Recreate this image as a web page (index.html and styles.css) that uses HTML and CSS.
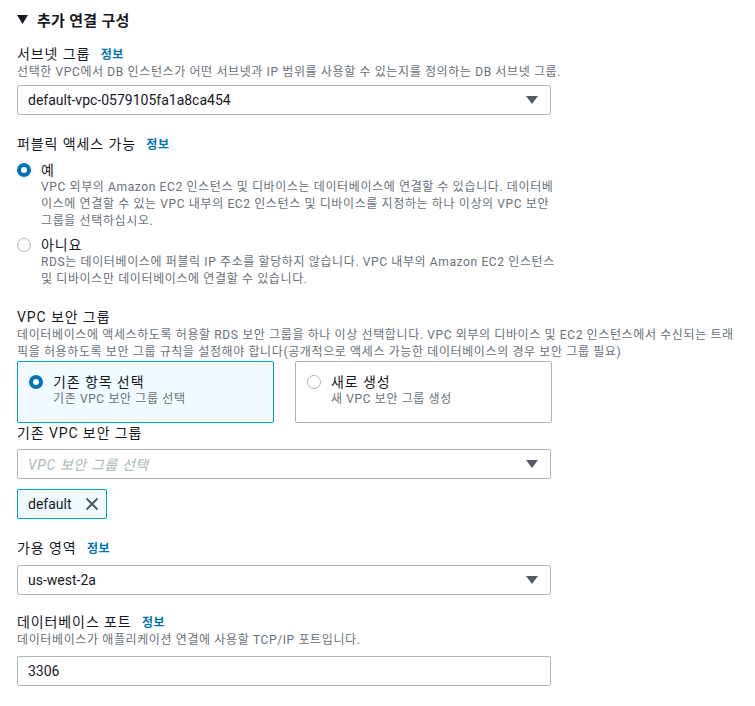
FILE: index.html
```html
<!DOCTYPE html>
<html lang="ko">
<head>
<meta charset="utf-8">
<link rel="stylesheet" href="styles.css">
</head>
<body>
<div class="page">
  <div class="section-head">
    <svg class="caret" width="11" height="9" viewBox="0 0 11 9"><path d="M0 0H11L5.5 9Z" fill="#16191f"/></svg>
    <span>추가 연결 구성</span>
  </div>

  <div class="field f-subnet">
    <div class="label">서브넷 그룹 <a class="info">정보</a></div>
    <div class="desc">선택한 VPC에서 DB 인스턴스가 어떤 서브넷과 IP 범위를 사용할 수 있는지를 정의하는 DB 서브넷 그룹.</div>
    <div class="select gap4">
      <span class="val">default-vpc-0579105fa1a8ca454</span>
      <svg class="arrow" width="12" height="8" viewBox="0 0 12 8"><path d="M0 0H12L6 8Z" fill="#545b64"/></svg>
    </div>
  </div>

  <div class="field f-public">
    <div class="label">퍼블릭 액세스 가능 <a class="info">정보</a></div>
    <div class="radio-row first">
      <span class="radio on"></span>
      <div class="radio-body">
        <div class="radio-title">예</div>
        <div class="desc">VPC 외부의 Amazon EC2 인스턴스 및 디바이스는 데이터베이스에 연결할 수 있습니다. 데이터베이스에 연결할 수 있는 VPC 내부의 EC2 인스턴스 및 디바이스를 지정하는 하나 이상의 VPC 보안 그룹을 선택하십시오.</div>
      </div>
    </div>
    <div class="radio-row">
      <span class="radio"></span>
      <div class="radio-body">
        <div class="radio-title">아니요</div>
        <div class="desc">RDS는 데이터베이스에 퍼블릭 IP 주소를 할당하지 않습니다. VPC 내부의 Amazon EC2 인스턴스 및 디바이스만 데이터베이스에 연결할 수 있습니다.</div>
      </div>
    </div>
  </div>

  <div class="field f-vpc">
    <div class="label">VPC 보안 그룹</div>
    <div class="desc wide">데이터베이스에 액세스하도록 허용할 RDS 보안 그룹을 하나 이상 선택합니다. VPC 외부의 디바이스 및 EC2 인스턴스에서 수신되는 트래픽을 허용하도록 보안 그룹 규칙을 설정해야 합니다(공개적으로 액세스 가능한 데이터베이스의 경우 보안 그룹 필요)</div>
    <div class="tiles">
      <div class="tile selected">
        <span class="radio on"></span>
        <div>
          <div class="radio-title">기존 항목 선택</div>
          <div class="desc">기존 VPC 보안 그룹 선택</div>
        </div>
      </div>
      <div class="tile">
        <span class="radio"></span>
        <div>
          <div class="radio-title">새로 생성</div>
          <div class="desc">새 VPC 보안 그룹 생성</div>
        </div>
      </div>
    </div>
    <div class="label">기존 VPC 보안 그룹</div>
    <div class="select gap6">
      <span class="placeholder">VPC 보안 그룹 선택</span>
      <svg class="arrow" width="12" height="8" viewBox="0 0 12 8"><path d="M0 0H12L6 8Z" fill="#545b64"/></svg>
    </div>
    <div class="token">
      <span>default</span>
      <svg width="14" height="14" viewBox="0 0 14 14"><path d="M1.5 1.5L12.5 12.5M12.5 1.5L1.5 12.5" stroke="#545b64" stroke-width="2"/></svg>
    </div>
  </div>

  <div class="field f-az">
    <div class="label">가용 영역 <a class="info">정보</a></div>
    <div class="select gap7">
      <span class="val">us-west-2a</span>
      <svg class="arrow" width="12" height="8" viewBox="0 0 12 8"><path d="M0 0H12L6 8Z" fill="#545b64"/></svg>
    </div>
  </div>

  <div class="field f-port">
    <div class="label">데이터베이스 포트 <a class="info">정보</a></div>
    <div class="desc">데이터베이스가 애플리케이션 연결에 사용할 TCP/IP 포트입니다.</div>
    <div class="select gap7">
      <span class="val">3306</span>
    </div>
  </div>
</div>
</body>
</html>
```

FILE: styles.css
```css
* { box-sizing: border-box; }
html, body { margin: 0; padding: 0; background: #ffffff; }
body {
  font-family: Roboto, "Noto Sans CJK KR", sans-serif;
  color: #16191f;
  font-size: 14px;
}
.page {
  padding: 8px 0 0 17px;
  width: 755px;
}
.section-head {
  display: flex;
  align-items: center;
  gap: 9px;
  height: 22px;
  font-size: 15px;
  font-weight: 700;
  letter-spacing: 0.3px;
}
.section-head .caret { margin-top: 1px; }

.field { width: 738px; }
.f-subnet { margin-top: 14px; }
.f-public { margin-top: 19px; }
.f-vpc { margin-top: 19px; }
.f-az { margin-top: 19px; }
.f-port { margin-top: 17px; }

.label {
  font-size: 14px;
  line-height: 20px;
  height: 20px;
  color: #16191f;
  letter-spacing: 0.9px;
}
.info {
  color: #0073bb;
  font-weight: 700;
  font-size: 12px;
  margin-left: 6px;
  letter-spacing: 0.5px;
}
.desc {
  font-size: 12px;
  line-height: 17px;
  color: #687078;
  letter-spacing: 0.62px;
}
.desc.wide { width: 725px; }

.select {
  width: 534px;
  height: 30px;
  border: 1px solid #aab7b8;
  border-radius: 2px;
  display: flex;
  align-items: center;
  justify-content: space-between;
  padding: 0 12px 0 10px;
  font-size: 14px;
}
.gap4 { margin-top: 4px; }
.gap6 { margin-top: 6px; }
.gap7 { margin-top: 7px; }
.placeholder {
  color: #aab7b8;
  font-style: italic;
  letter-spacing: 0.6px;
}

.radio-row {
  display: flex;
  gap: 10px;
  margin-top: 6px;
  width: 546px;
}
.radio-row.first { margin-top: 7px; }
.radio-title {
  font-size: 14px;
  line-height: 18px;
  letter-spacing: 0.9px;
}
.radio {
  flex: none;
  width: 14px;
  height: 14px;
  border-radius: 50%;
  border: 1.5px solid #aab7b8;
  background: #fff;
  margin-top: 2px;
}
.radio.on {
  border: 4px solid #0073bb;
}

.tiles {
  display: flex;
  gap: 21px;
}
.tile {
  width: 257px;
  height: 62px;
  border: 1px solid #aab7b8;
  border-radius: 2px;
  display: flex;
  gap: 10px;
  padding: 11px 11px 0 11px;
}
.tile.selected {
  background: #f1faff;
  border-color: #00a1c9;
}

.token {
  margin-top: 10px;
  width: 90px;
  height: 30px;
  border: 1px solid #00a1c9;
  border-radius: 2px;
  background: #f1faff;
  display: flex;
  align-items: center;
  justify-content: space-between;
  padding: 0 7px 0 10px;
  font-size: 14px;
}
```
